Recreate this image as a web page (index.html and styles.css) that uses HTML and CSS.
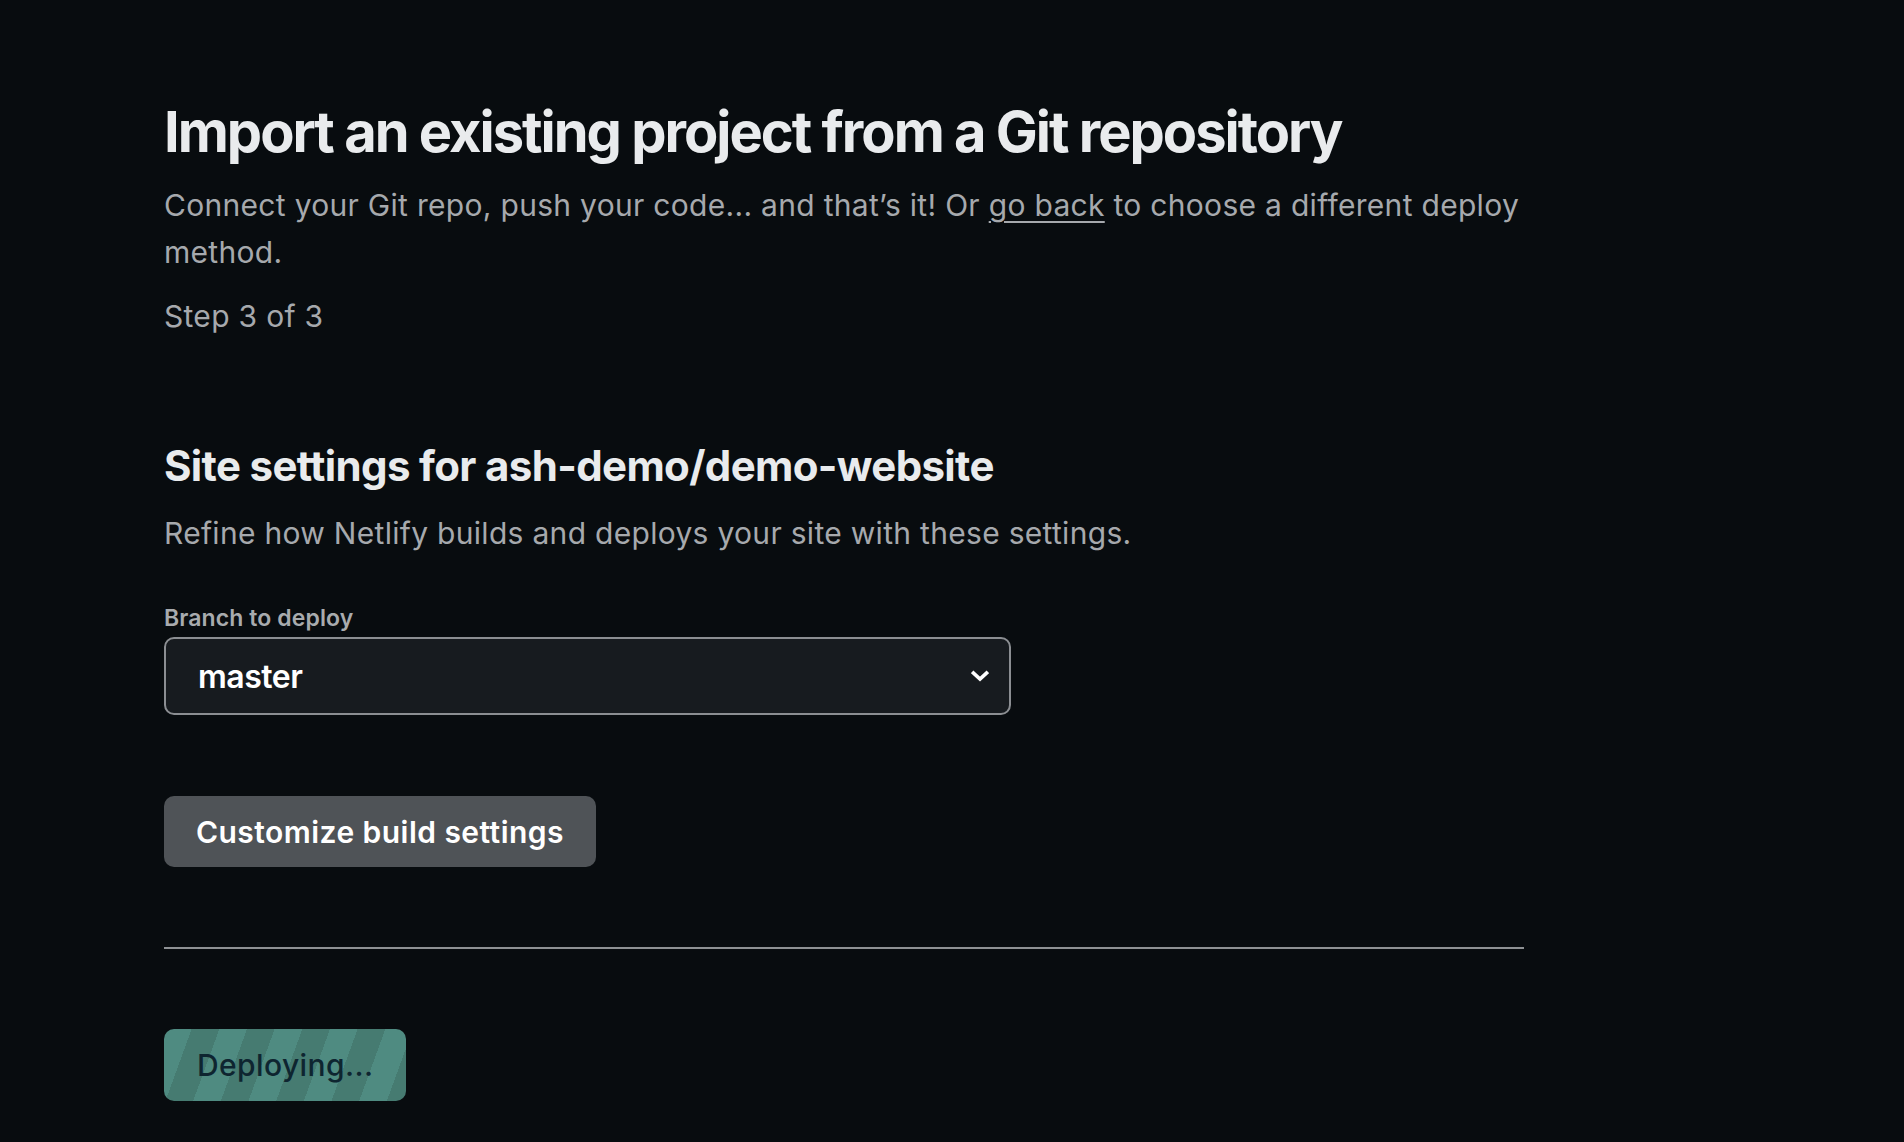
FILE: index.html
```html
<!DOCTYPE html>
<html lang="en">
<head>
    <meta charset="UTF-8">
    <meta name="viewport" content="width=device-width, initial-scale=1.0">
    <title>Import an existing project</title>
    <link rel="stylesheet" href="styles.css">
</head>
<body>
    <main class="page">
      <header class="intro">
        <h1 class="pageTitle">Import an existing project from a Git repository</h1>
        <p class="lead">Connect your Git repo, push your code... and that’s it! Or <a href="#" class="backLink">go back</a> to choose a different deploy method.</p>
        <p class="lead step">Step 3 of 3</p>
      </header>

      <section class="siteSettings">
        <h2 class="sectionTitle">Site settings for ash-demo/demo-website</h2>
        <p class="lead">Refine how Netlify builds and deploys your site with these settings.</p>

        <label class="fieldLabel" for="branch">Branch to deploy</label>
        <div class="selectBox" id="branch">
          <span class="selectValue">master</span>
          <svg class="chevron" width="18" height="12" viewBox="0 0 18 12">
            <polyline points="2.5,3 9,9 15.5,3" fill="none" stroke="#ffffff" stroke-width="3.6" stroke-linecap="square"/>
          </svg>
        </div>

        <button class="btn btnSecondary">Customize build settings</button>
      </section>

      <hr class="divider">

      <button class="btn btnDeploying">Deploying...</button>
    </main>
</body>
</html>
```

FILE: styles.css
```css
body {
  margin: 0;
  background: #080c0f;
  font-family: Inter, "Noto Sans", sans-serif;
  color: #a6a9ad;
}
.page {
  max-width: 1360px;
  padding: 99px 0 80px 164px;
}
.pageTitle {
  margin: 0;
  font-size: 56px;
  line-height: 67px;
  font-weight: 700;
  color: #e9ebed;
  letter-spacing: -2px;
}
.lead {
  margin: 16px 0 0;
  font-size: 30px;
  line-height: 47px;
  color: #a6a9ad;
  letter-spacing: 0.3px;
}
.step {
  margin-top: 17px;
}
.backLink {
  color: #a6a9ad;
  text-decoration: underline;
  text-underline-offset: 5px;
  text-decoration-thickness: 2px;
}
.siteSettings {
  margin-top: 101px;
}
.sectionTitle {
  margin: 0;
  font-size: 42px;
  line-height: 50px;
  font-weight: 700;
  color: #e9ebed;
  letter-spacing: -0.65px;
}
.siteSettings .lead {
  margin-top: 19px;
}
.fieldLabel {
  display: block;
  margin-top: 47px;
  font-size: 23px;
  line-height: 28px;
  font-weight: 600;
  color: #a8abae;
  letter-spacing: 0.1px;
}
.selectBox {
  margin-top: 5px;
  width: 847px;
  height: 78px;
  box-sizing: border-box;
  border: 2px solid #8b8e92;
  border-radius: 10px;
  background: #171b1f;
  display: flex;
  align-items: center;
  justify-content: space-between;
  padding: 0 20px 0 32px;
}
.selectValue {
  font-size: 32px;
  font-weight: 600;
  color: #ffffff;
  letter-spacing: -0.5px;
}
.chevron {
  display: block;
}
.btn {
  display: block;
  border: 0;
  border-radius: 10px;
  font-family: Inter, "Noto Sans", sans-serif;
  font-size: 30px;
  font-weight: 600;
  padding: 0 32px;
  letter-spacing: 0.45px;
  cursor: pointer;
}
.btnSecondary {
  margin-top: 81px;
  height: 71px;
  background: #4f5357;
  color: #ffffff;
}
.divider {
  margin: 80px 0 0;
  border: 0;
  height: 2px;
  background: #8e9194;
}
.btnDeploying {
  margin-top: 80px;
  height: 72px;
  padding: 0 33px;
  color: #0e2530;
  font-weight: 500;
  letter-spacing: 0.4px;
  background: repeating-linear-gradient(110deg, #4f8b81 0, #4f8b81 26px, #467b71 26px, #467b71 52px);
}
```
